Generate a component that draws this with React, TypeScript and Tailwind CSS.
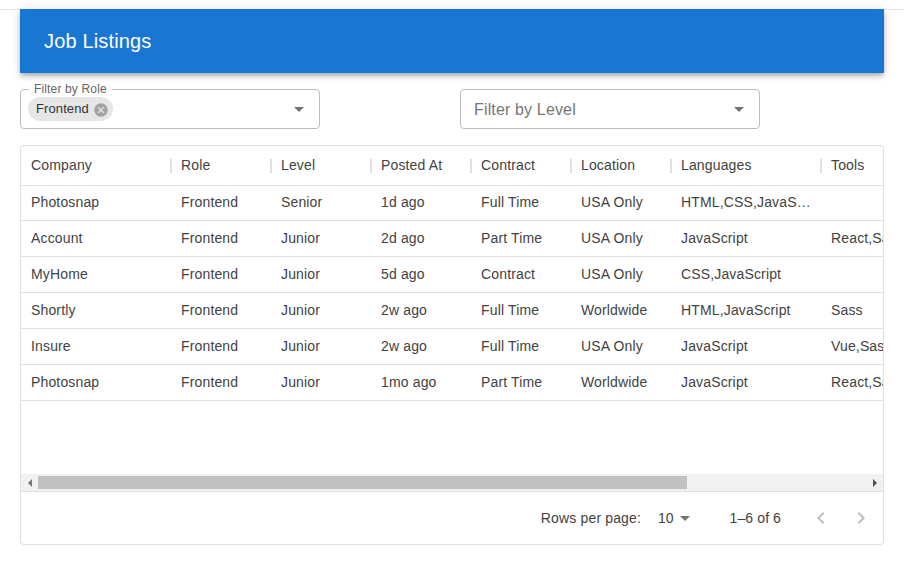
const columns = [
  { name: "Company", width: "w-[150px]" },
  { name: "Role", width: "w-[100px]" },
  { name: "Level", width: "w-[100px]" },
  { name: "Posted At", width: "w-[100px]" },
  { name: "Contract", width: "w-[100px]" },
  { name: "Location", width: "w-[100px]" },
  { name: "Languages", width: "w-[150px]" },
  { name: "Tools", width: "w-[150px]" },
];

const rows = [
  ["Photosnap", "Frontend", "Senior", "1d ago", "Full Time", "USA Only", "HTML,CSS,JavaScript", ""],
  ["Account", "Frontend", "Junior", "2d ago", "Part Time", "USA Only", "JavaScript", "React,Sass"],
  ["MyHome", "Frontend", "Junior", "5d ago", "Contract", "USA Only", "CSS,JavaScript", ""],
  ["Shortly", "Frontend", "Junior", "2w ago", "Full Time", "Worldwide", "HTML,JavaScript", "Sass"],
  ["Insure", "Frontend", "Junior", "2w ago", "Full Time", "USA Only", "JavaScript", "Vue,Sass"],
  ["Photosnap", "Frontend", "Junior", "1mo ago", "Part Time", "Worldwide", "JavaScript", "React,Sass"],
];

function Caret({ className }: { className?: string }) {
  return (
    <svg viewBox="0 0 24 24" className={className} fill="currentColor">
      <path d="M7 10l5 5 5-5z" />
    </svg>
  );
}

function FilterBox({ children, legend }: { children: React.ReactNode; legend?: string }) {
  return (
    <div className="relative flex h-10 w-[300px] items-center rounded border border-[#bdbdbd] pl-[7px] pr-[8px]">
      {legend && (
        <span className="absolute left-[8px] top-[-8px] bg-white px-[5px] text-xs leading-[14px] tracking-[0.15px] text-[#666]">
          {legend}
        </span>
      )}
      <div className="flex min-w-0 flex-1 items-center">{children}</div>
      <Caret className="h-6 w-6 text-[#757575]" />
    </div>
  );
}

export default function App() {
  return (
    <div className="h-[584px] w-[904px] overflow-hidden bg-white pt-[9px] font-['Liberation_Sans',Arial,sans-serif] text-sm text-[#424242]">
      <div className="border-t border-[#e6e6e6]" />
      <div className="mx-5 mt-[-1px]">
        <header className="flex h-16 items-center bg-[#1976d2] px-6 text-[20px] tracking-[0.15px] text-white shadow-[0_2px_4px_-1px_rgba(0,0,0,0.2),0_4px_5px_0_rgba(0,0,0,0.14),0_1px_10px_0_rgba(0,0,0,0.12)]">
          Job Listings
        </header>

        <div className="mt-4 flex gap-[140px]">
          <FilterBox legend="Filter by Role">
            <span className="flex h-6 items-center rounded-full bg-[#e6e6e6] pl-2 pr-[4px] pt-[1px] text-[13px] tracking-[0.1px] text-[#333]">
              Frontend
              <svg viewBox="0 0 24 24" className="ml-[4px] h-[16px] w-[16px] text-[#a3a3a3]" fill="currentColor">
                <path d="M12 2C6.47 2 2 6.47 2 12s4.47 10 10 10 10-4.47 10-10S17.53 2 12 2zm5 13.59L15.59 17 12 13.41 8.41 17 7 15.59 10.59 12 7 8.41 8.41 7 12 10.59 15.59 7 17 8.41 13.41 12 17 15.59z" />
              </svg>
            </span>
          </FilterBox>
          <FilterBox>
            <span className="pl-[6px] pt-[2px] text-base tracking-[0.15px] text-[#757575]">Filter by Level</span>
          </FilterBox>
        </div>

        <div className="mt-4 h-[400px] overflow-hidden rounded border border-[#e0e0e0]">
          <div className="h-[328px] overflow-hidden">
            <div className="flex h-10 w-[1050px] items-center border-b border-[#e0e0e0] pb-[2px]">
              {columns.map((col, i) => (
                <div key={col.name} className={`${col.width} relative shrink-0 px-[10px] tracking-[0.15px]`}>
                  {col.name}
                  {i < columns.length - 1 && (
                    <span className="absolute right-[-1px] top-[4px] h-[14px] w-[2px] bg-[#e0e0e0]" />
                  )}
                </div>
              ))}
            </div>
            {rows.map((row, r) => (
              <div
                key={r}
                className={`flex w-[1050px] items-center border-b border-[#e0e0e0] pb-[2px] ${r === 0 ? "h-[35px]" : "h-9"}`}
              >
                {row.map((cell, c) => (
                  <div key={c} className={`${columns[c].width} shrink-0 truncate px-[10px] tracking-[0.15px]`}>
                    {cell}
                  </div>
                ))}
              </div>
            ))}
          </div>

          <div className="flex h-[18px] items-center border-b border-[#e0e0e0] bg-[#f1f1f1]">
            <div className="flex h-full w-[17px] items-center justify-center">
              <span className="h-0 w-0 border-y-[4px] border-r-[4px] border-y-transparent border-r-[#777]" />
            </div>
            <div className="h-[13px] w-[649px] bg-[#c1c1c1]" />
            <div className="flex h-full flex-1 items-center justify-end pr-[6px]">
              <span className="h-0 w-0 border-y-[4px] border-l-[4px] border-y-transparent border-l-[#505050]" />
            </div>
          </div>

          <div className="flex h-[52px] items-center justify-end">
            <span className="tracking-[0.15px]">Rows per page:</span>
            <span className="ml-[17px] flex items-center">
              <span className="pb-[1px]">10</span>
              <Caret className="ml-[-1px] h-6 w-6 text-[#757575]" />
            </span>
            <span className="ml-[33px] tracking-[0.1px]">1–6 of 6</span>
            <svg viewBox="0 0 24 24" className="ml-[28px] h-6 w-6 text-[#bdbdbd]" fill="currentColor">
              <path d="M15.41 7.41 14 6l-6 6 6 6 1.41-1.41L10.83 12z" />
            </svg>
            <svg viewBox="0 0 24 24" className="ml-4 mr-[10px] h-6 w-6 text-[#bdbdbd]" fill="currentColor">
              <path d="M10 6 8.59 7.41 13.17 12l-4.58 4.59L10 18l6-6z" />
            </svg>
          </div>
        </div>
      </div>
    </div>
  );
}
